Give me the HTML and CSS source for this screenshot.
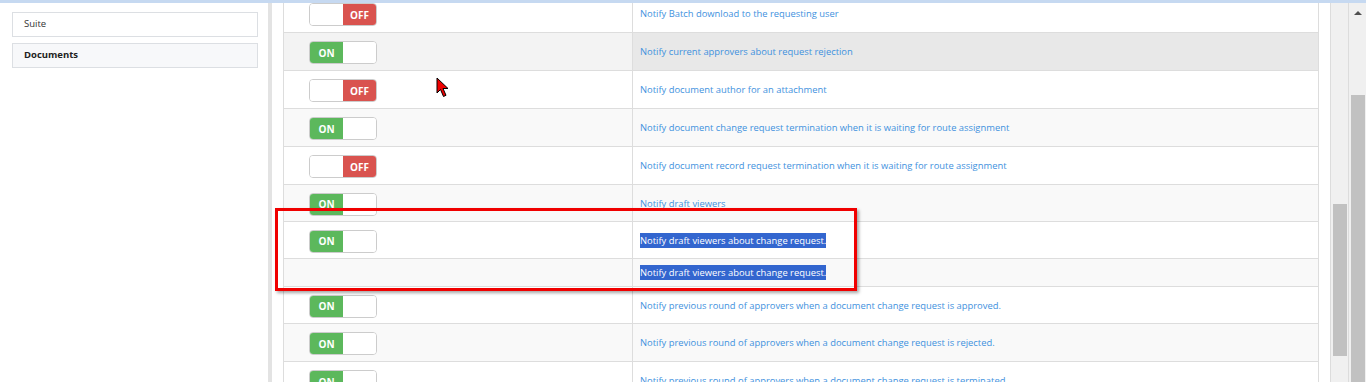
FILE: index.html
```html
<!DOCTYPE html>
<html lang="en">
<head>
    <meta charset="UTF-8">
    <title>Notification settings</title>
    <link rel="stylesheet" href="styles.css">
</head>
<body>

    <div class="topbar"></div>

    <div class="main">
        <div class="sidebar">
            <div class="nav-item">Suite</div>
            <div class="nav-item active">Documents</div>
        </div>
        <div class="splitter"></div>
        <div class="spacer"></div>

        <div class="grid-wrap">
            <div class="grid">
                <div class="row">
                    <div class="cell-switch"><div class="switch off"><div class="track"><span class="on-part">ON</span><span class="handle"></span><span class="off-part">OFF</span></div></div></div>
                    <div class="cell-text"><a>Notify Batch download to the requesting user</a></div>
                </div>
                <div class="row stripe hover">
                    <div class="cell-switch"><div class="switch"><div class="track"><span class="on-part">ON</span><span class="handle"></span><span class="off-part">OFF</span></div></div></div>
                    <div class="cell-text"><a>Notify current approvers about request rejection</a></div>
                </div>
                <div class="row">
                    <div class="cell-switch"><div class="switch off"><div class="track"><span class="on-part">ON</span><span class="handle"></span><span class="off-part">OFF</span></div></div></div>
                    <div class="cell-text"><a>Notify document author for an attachment</a></div>
                </div>
                <div class="row stripe">
                    <div class="cell-switch"><div class="switch"><div class="track"><span class="on-part">ON</span><span class="handle"></span><span class="off-part">OFF</span></div></div></div>
                    <div class="cell-text"><a>Notify document change request termination when it is waiting for route assignment</a></div>
                </div>
                <div class="row">
                    <div class="cell-switch"><div class="switch off"><div class="track"><span class="on-part">ON</span><span class="handle"></span><span class="off-part">OFF</span></div></div></div>
                    <div class="cell-text"><a>Notify document record request termination when it is waiting for route assignment</a></div>
                </div>
                <div class="row stripe tight">
                    <div class="cell-switch"><div class="switch"><div class="track"><span class="on-part">ON</span><span class="handle"></span><span class="off-part">OFF</span></div></div></div>
                    <div class="cell-text"><a>Notify draft viewers</a></div>
                </div>
                <div class="row tight">
                    <div class="cell-switch"><div class="switch"><div class="track"><span class="on-part">ON</span><span class="handle"></span><span class="off-part">OFF</span></div></div></div>
                    <div class="cell-text"><span class="selected">Notify draft viewers about change request.</span></div>
                </div>
                <div class="row stripe short">
                    <div class="cell-switch"></div>
                    <div class="cell-text"><span class="selected">Notify draft viewers about change request.</span></div>
                </div>
                <div class="row tight">
                    <div class="cell-switch"><div class="switch"><div class="track"><span class="on-part">ON</span><span class="handle"></span><span class="off-part">OFF</span></div></div></div>
                    <div class="cell-text"><a>Notify previous round of approvers when a document change request is approved.</a></div>
                </div>
                <div class="row stripe">
                    <div class="cell-switch"><div class="switch"><div class="track"><span class="on-part">ON</span><span class="handle"></span><span class="off-part">OFF</span></div></div></div>
                    <div class="cell-text"><a>Notify previous round of approvers when a document change request is rejected.</a></div>
                </div>
                <div class="row">
                    <div class="cell-switch"><div class="switch"><div class="track"><span class="on-part">ON</span><span class="handle"></span><span class="off-part">OFF</span></div></div></div>
                    <div class="cell-text"><a>Notify previous round of approvers when a document change request is terminated.</a></div>
                </div>
            </div>
        </div>

        <div class="spacer"></div>

        <div class="scrollbar inner-scroll">
            <div class="thumb"></div>
        </div>
        <div class="scrollbar page-scroll">
            <div class="arrow"></div>
            <div class="thumb"></div>
        </div>
    </div>

    <!-- annotation drawn over the screenshot -->
    <div class="annotation"></div>

    <svg class="cursor" width="16" height="22" viewBox="0 0 16 22">
        <path d="M1 1 L1 16 L4.5 12.5 L7.5 19.5 L10 18.3 L7 11.5 L12 11.5 Z" fill="#ee0000" stroke="#000" stroke-width="1"/>
    </svg>

</body>
</html>
```

FILE: styles.css
```css
* {
    box-sizing: border-box;
}

body {
    margin: 0;
    padding: 0;
    font-family: 'Open Sans', sans-serif;
    font-size: 9.4px;
    color: #333;
    background: #fff;
    overflow: hidden;
    height: 382px;
}

.topbar {
    height: 3px;
    background-color: #c6d9f1;
}

.main {
    display: flex;
    height: 379px;
    overflow: hidden;
}

/* left navigation */
.sidebar {
    width: 268px;
    flex: none;
    padding: 9px 10px 0 12px;
}

.nav-item {
    height: 25px;
    border: 1px solid #dcdfe3;
    padding-left: 11px;
    line-height: 22px;
    font-size: 9.5px;
    color: #333;
    margin-bottom: 6px;
}

.nav-item.active {
    background-color: #f7f8fa;
    font-weight: 700;
    color: #222;
}

.splitter {
    width: 4px;
    flex: none;
    background-color: #e3e3e3;
}

.spacer {
    width: 11px;
    flex: none;
}

/* settings grid */
.grid-wrap {
    width: 1036px;
    flex: none;
    border-left: 1px solid #dddddd;
    border-right: 1px solid #dddddd;
    overflow: hidden;
}

.grid {
    margin-top: -8px;
}

.row {
    display: flex;
    height: 38px;
    border-bottom: 1px solid #dddddd;
    background-color: #fff;
}

.row.tight {
    height: 37px;
}

.row.short {
    height: 28px;
}

.row.stripe {
    background-color: #f9f9f9;
}

.row.hover {
    background-color: #f3f3f3;
}

.row.hover .cell-text {
    background-color: #e8e8e8;
}

.cell-switch {
    width: 349px;
    flex: none;
    display: flex;
    align-items: center;
    padding-left: 25px;
    border-right: 1px solid #dddddd;
}

.cell-text {
    flex: 1;
    display: flex;
    align-items: center;
    padding-left: 7px;
}

.cell-text a {
    color: #3f92de;
    text-decoration: none;
}

.selected {
    background-color: #3366cf;
    color: #fff;
    padding: 1px 0;
}

/* on/off switch */
.switch {
    width: 68px;
    height: 23px;
    border: 1px solid #cccccc;
    border-radius: 4px;
    overflow: hidden;
    margin-top: 2px;
    background-color: #fff;
}

.track {
    display: flex;
    width: 99px;
    height: 100%;
}

.switch.off .track {
    margin-left: -33px;
}

.track span {
    width: 33px;
    flex: none;
    display: flex;
    align-items: center;
    justify-content: center;
    font-size: 10px;
    font-weight: 700;
    color: #fff;
}

.on-part {
    background-color: #5cb85c;
}

.off-part {
    background-color: #d9534f;
}

.track .handle {
    background-color: #fff;
}

/* scrollbars */
.scrollbar {
    width: 18px;
    flex: none;
    border-left: 1px solid #dcdcdc;
    background-color: #f0f0f0;
    display: flex;
    flex-direction: column;
}

.scrollbar .thumb {
    width: 14px;
    margin-left: 2px;
    background-color: #c1c1c1;
}

.inner-scroll .thumb {
    margin-top: 201px;
    height: 152px;
}

.page-scroll .arrow {
    width: 0;
    height: 0;
    margin: 8px 0 0 5px;
    border-left: 4px solid transparent;
    border-right: 4px solid transparent;
    border-bottom: 4px solid #505050;
}

.page-scroll .thumb {
    margin-top: 80px;
    flex: 1;
}

.annotation {
    position: absolute;
    left: 275px;
    top: 208px;
    width: 582px;
    height: 83px;
    border: 3px solid #f00000;
    box-shadow: 2px 2px 3px rgba(0, 0, 0, 0.35);
}

.cursor {
    position: absolute;
    left: 436px;
    top: 77px;
}
```
